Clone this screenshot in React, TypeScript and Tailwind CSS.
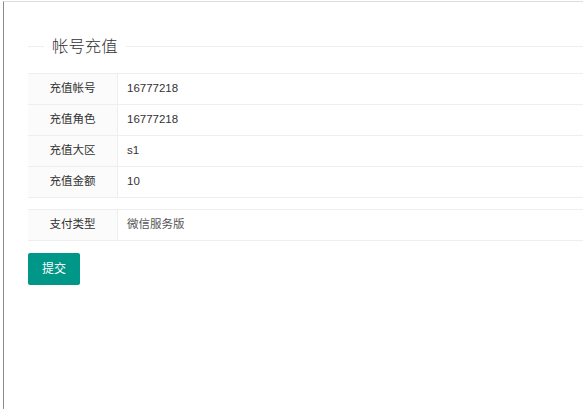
const font = { fontFamily: '"Liberation Sans", "Noto Sans CJK SC", sans-serif' };

const rows = [
    { label: '充值帐号', value: '16777218' },
    { label: '充值角色', value: '16777218' },
    { label: '充值大区', value: 's1' },
    { label: '充值金额', value: '10' },
];

function Row({ label, value, muted }: { label: string; value: string; muted?: boolean }) {
    return (
        <div className="flex h-[31px] border-b border-[#eeeeee]">
            <div className="w-[90px] shrink-0 bg-[#fbfbfb] border-r border-[#eeeeee] flex items-center justify-center text-[11.5px] text-[#333]">
                {label}
            </div>
            <div className={`flex-1 flex items-center pl-[9px] text-[11.5px] ${muted ? 'text-[#555]' : 'text-[#333]'}`}>
                {value}
            </div>
        </div>
    );
}

export default function App() {
    return (
        <div className="w-[583px] h-[409px] overflow-hidden bg-white" style={font}>
            <div className="ml-[3px] mt-[1px] h-[408px] border-l border-l-[#8c8c8c] border-t border-t-[#dedede]">
                <div className="pl-[24px] pt-[33px]">
                    {/* fieldset title */}
                    <div className="flex items-center h-[22px]">
                        <div className="w-[16px] border-t border-[#eeeeee]" />
                        <span className="px-[8px] text-[16.4px] font-light text-[#333] leading-none">帐号充值</span>
                        <div className="flex-1 border-t border-[#eeeeee]" />
                    </div>

                    <div className="mt-[16px] border-t border-[#eeeeee]">
                        {rows.map((r) => (
                            <Row key={r.label} label={r.label} value={r.value} />
                        ))}
                    </div>

                    <div className="mt-[11px] border-t border-[#eeeeee]">
                        <Row label="支付类型" value="微信服务版" muted />
                    </div>

                    <button className="mt-[12px] w-[52px] h-[32px] bg-[#009688] text-white text-[12px] rounded-[2px]">
                        提交
                    </button>
                </div>
            </div>
        </div>
    );
}
